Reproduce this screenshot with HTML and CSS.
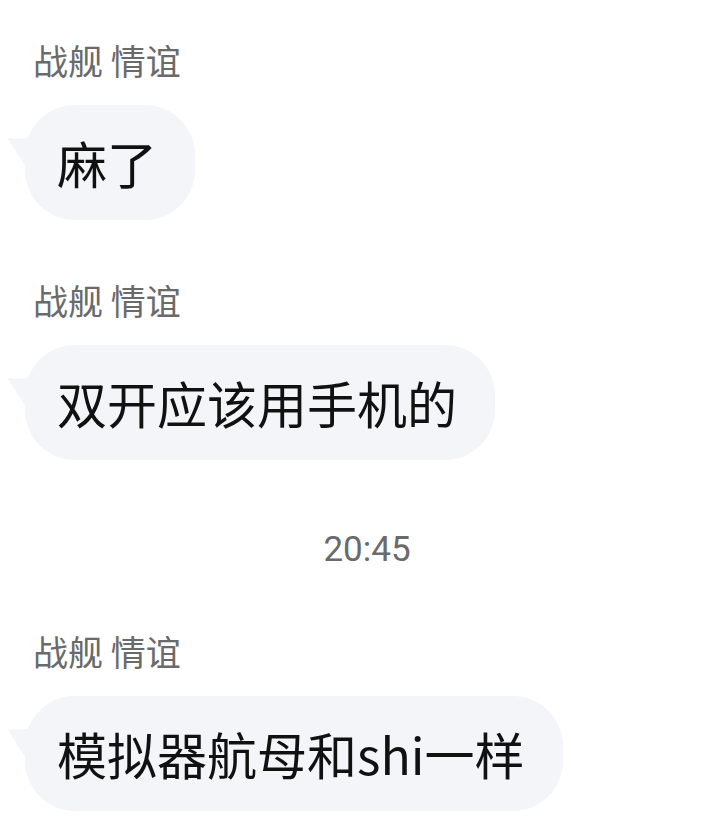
FILE: index.html
```html
<!DOCTYPE html>
<html lang="zh-CN">
<head>
  <meta charset="UTF-8">
  <meta name="viewport" content="width=device-width, initial-scale=1.0">
  <title>聊天记录</title>
  <link rel="stylesheet" href="styles.css">
</head>
<body>
  <!-- Chat log -->
  <div class="chat">
    <div class="msg">
      <div class="name">战舰 情谊</div>
      <div class="bubble">
        <svg class="tail" width="24" height="40" viewBox="0 0 24 40"><path d="M24 2 C16 4 8 4 0 3 C6 10 12 24 24 38 Z"/></svg>
        麻了
      </div>
    </div>

    <div class="msg">
      <div class="name">战舰 情谊</div>
      <div class="bubble">
        <svg class="tail" width="24" height="40" viewBox="0 0 24 40"><path d="M24 2 C16 4 8 4 0 3 C6 10 12 24 24 38 Z"/></svg>
        双开应该用手机的
      </div>
    </div>

    <div class="time">20:45</div>

    <div class="msg">
      <div class="name">战舰 情谊</div>
      <div class="bubble">
        <svg class="tail" width="24" height="40" viewBox="0 0 24 40"><path d="M24 2 C16 4 8 4 0 3 C6 10 12 24 24 38 Z"/></svg>
        模拟器航母和shi一样
      </div>
    </div>
  </div>
</body>
</html>
```

FILE: styles.css
```css
/* Global */
body {
  margin: 0;
  background: #ffffff;
  font-family: "Noto Sans CJK SC", "Noto Sans", sans-serif;
}

.chat {
  padding: 40px 0 0 25px;
}

/* Message */
.msg {
  margin-block-end: 60px;
}

.msg:last-child {
  margin-block-end: 0;
}

.name {
  margin-inline-start: 8px;
  font-size: 35px;
  line-height: 40px;
  color: #6a6a6a;
  margin-block-end: 25px;
}

.bubble {
  position: relative;
  display: inline-block;
  padding: 25px 38px 25px 32px;
  font-size: 50px;
  line-height: 65px;
  color: #111111;
  background: #f4f5f9;
  border-radius: 50px;
}

/* little tail on the left of the bubble */
.tail {
  position: absolute;
  left: -18px;
  top: 30px;
  fill: #f4f5f9;
}

/* Timestamp */
.time {
  margin: 70px 0 61px;
  padding-inline-start: 8px;
  text-align: center;
  font-family: Roboto, "Noto Sans", sans-serif;
  font-size: 35px;
  line-height: 40px;
  color: #6a6a6a;
}
```
